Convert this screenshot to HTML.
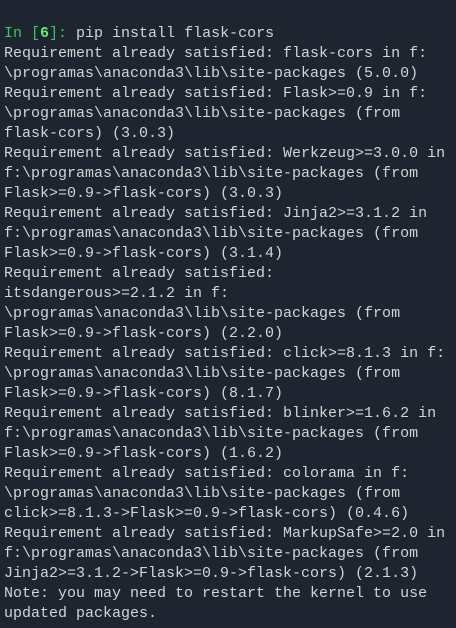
<!DOCTYPE html>
<html><head><meta charset="utf-8"><style>
html,body{margin:0;padding:0;background:#1e2430;width:456px;height:628px;overflow:hidden}
pre{margin:0;position:absolute;left:4px;top:24px;font-family:"Liberation Mono",monospace;font-size:15px;line-height:20px;color:#d4d4d4;white-space:pre}
.g{color:#3cc65a}.b{color:#5ef07a;font-weight:bold}
</style></head><body><pre><span class="g">In [</span><span class="b">6</span><span class="g">]:</span> pip install flask-cors
Requirement already satisfied: flask-cors in f:
\programas\anaconda3\lib\site-packages (5.0.0)
Requirement already satisfied: Flask>=0.9 in f:
\programas\anaconda3\lib\site-packages (from
flask-cors) (3.0.3)
Requirement already satisfied: Werkzeug>=3.0.0 in
f:\programas\anaconda3\lib\site-packages (from
Flask>=0.9->flask-cors) (3.0.3)
Requirement already satisfied: Jinja2>=3.1.2 in
f:\programas\anaconda3\lib\site-packages (from
Flask>=0.9->flask-cors) (3.1.4)
Requirement already satisfied:
itsdangerous>=2.1.2 in f:
\programas\anaconda3\lib\site-packages (from
Flask>=0.9->flask-cors) (2.2.0)
Requirement already satisfied: click>=8.1.3 in f:
\programas\anaconda3\lib\site-packages (from
Flask>=0.9->flask-cors) (8.1.7)
Requirement already satisfied: blinker>=1.6.2 in
f:\programas\anaconda3\lib\site-packages (from
Flask>=0.9->flask-cors) (1.6.2)
Requirement already satisfied: colorama in f:
\programas\anaconda3\lib\site-packages (from
click>=8.1.3->Flask>=0.9->flask-cors) (0.4.6)
Requirement already satisfied: MarkupSafe>=2.0 in
f:\programas\anaconda3\lib\site-packages (from
Jinja2>=3.1.2->Flask>=0.9->flask-cors) (2.1.3)
Note: you may need to restart the kernel to use
updated packages.</pre></body></html>
